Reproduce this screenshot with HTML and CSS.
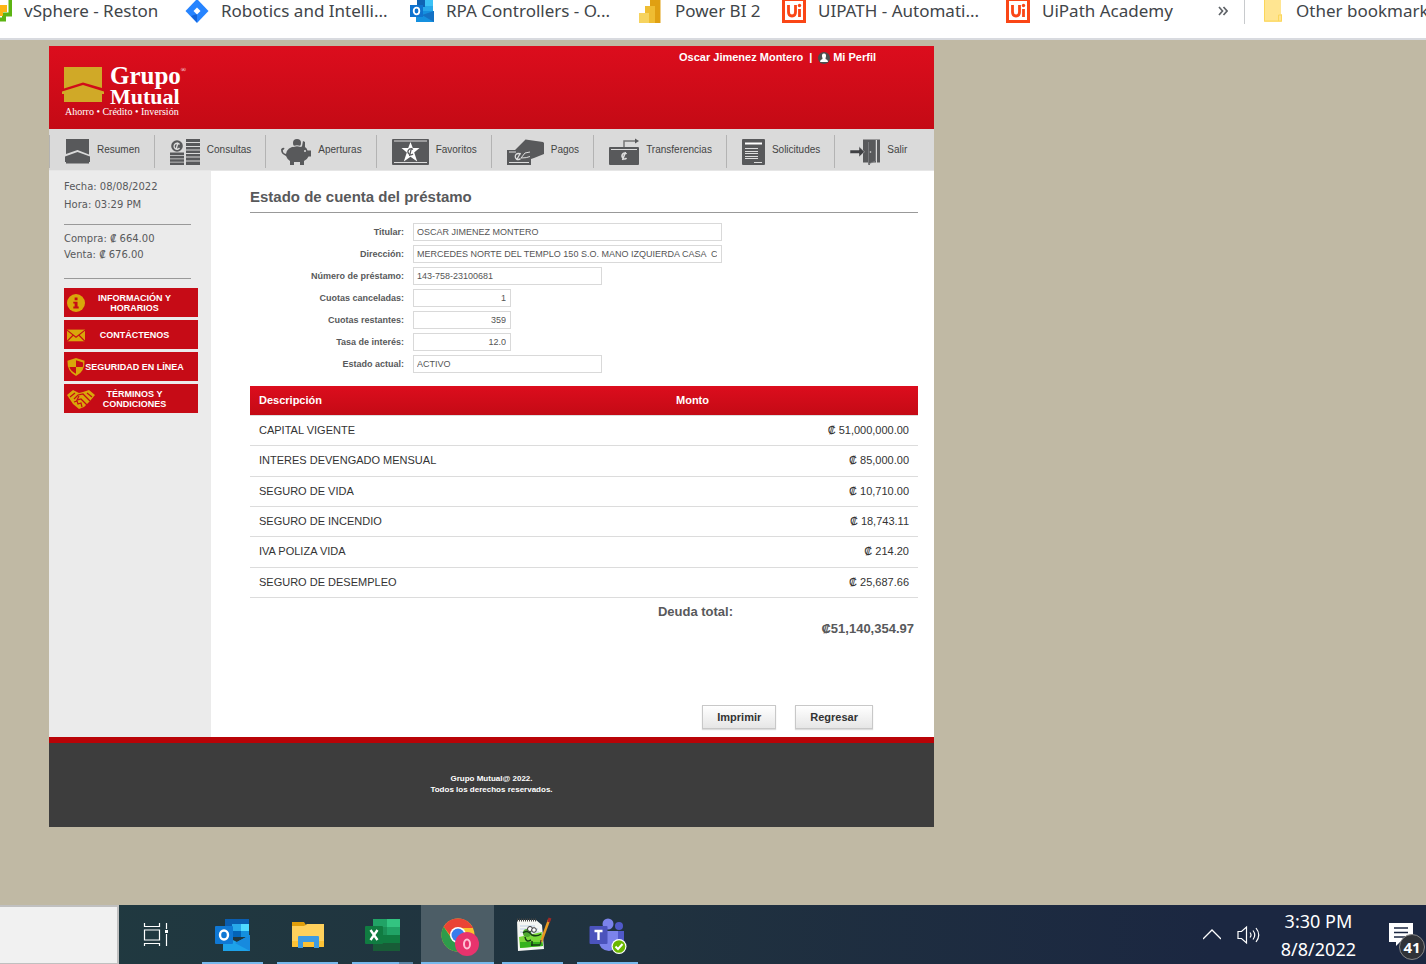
FILE: index.html
```html
<!DOCTYPE html>
<html lang="es">
<head>
<meta charset="utf-8">
<meta name="viewport" content="width=device-width, initial-scale=1">
<title>Grupo Mutual - Estado de cuenta del préstamo</title>
<link rel="stylesheet" href="styles.css">
</head>
<body>
<nav class="bookmarks" aria-label="Bookmarks">
  <div class="bookmark-list">
    <a class="bookmark" href="#"><svg class="bookmark-icon" viewBox="0 0 24 24"><path d="M8 -4H22.500V14.500H16V19.500H2V9" fill="none" stroke="#5cb413" stroke-width="4"/><path d="M12 5h7v7h-4v4h-5v-6h2z" fill="#fdb515"/></svg><span>vSphere - Reston</span></a>
    <a class="bookmark" href="#"><svg class="bookmark-icon" viewBox="0 0 24 24"><path d="M12 -1 23.500 11 12 23 .5 11z" fill="#2684ff"/><path d="M12 14v8.500L6 16z" fill="#1463d8"/><path d="M12 7.500 15.500 11 12 14.500 8.500 11z" fill="#fff"/></svg><span>Robotics and Intelli...</span></a>
    <a class="bookmark" href="#"><svg class="bookmark-icon" viewBox="0 0 24 24"><path d="M7 0h16v12H7z" fill="#28a8ea"/><path d="M7 0h8v7H7z" fill="#0f64b4"/><path d="M15 0h8v6h-8z" fill="#3cc2f6"/><path d="M6 11h18v11H6z" fill="#1590df"/><path d="M24 11v11L12 15z" fill="#1471c4"/><path d="M0 5h13v12H0z" fill="#0f73cf"/><ellipse cx="6.500" cy="11" rx="2.800" ry="3.300" fill="none" stroke="#fff" stroke-width="1.800"/></svg><span>RPA Controllers - O...</span></a>
    <a class="bookmark" href="#"><svg class="bookmark-icon" viewBox="0 0 24 24"><path d="M11-2h10.500v25H11z" fill="#e0a012"/><path d="M6 6h10v17H6z" fill="#efbd32"/><path d="M0 13h10v10H0z" fill="#f6d35f"/></svg><span>Power BI 2</span></a>
    <a class="bookmark" href="#"><svg class="bookmark-icon" viewBox="0 0 24 24"><path d="M1.500-.500h21v22h-21z" fill="#fff" stroke="#fa4616" stroke-width="3"/><path d="M6.500 5v7q0 4 3.500 4t3.500-4V5M17.500 9v8" fill="none" stroke="#fa4616" stroke-width="2.800"/><circle cx="17.500" cy="5.500" r="1.700" fill="#fa4616"/></svg><span>UIPATH - Automati...</span></a>
    <a class="bookmark" href="#"><svg class="bookmark-icon" viewBox="0 0 24 24"><path d="M1.500-.500h21v22h-21z" fill="#fff" stroke="#fa4616" stroke-width="3"/><path d="M6.500 5v7q0 4 3.500 4t3.500-4V5M17.500 9v8" fill="none" stroke="#fa4616" stroke-width="2.800"/><circle cx="17.500" cy="5.500" r="1.700" fill="#fa4616"/></svg><span>UiPath Academy</span></a>
  </div>
  <button class="bookmark-more" type="button" aria-label="More bookmarks"><svg viewBox="0 0 10 10"><path d="M1 1l3.500 4L1 9M5.500 1 9 5 5.500 9" fill="none" stroke="#5f6368" stroke-width="1.700"/></svg></button>
  <a class="bookmark bookmark-other" href="#"><svg class="bookmark-folder" viewBox="0 0 18 24"><path d="M0 0h17v14h1v8H0z" fill="#ffe591"/><path d="M.5 0v21h17v-6h-3v6" fill="none" stroke="#fbd65b"/></svg><span>Other bookmarks</span></a>
</nav>

<div class="viewport">
<div class="site">
  <header class="header">
    <a class="logo" href="#">
      <span class="logo-top">
        <svg class="logo-mark" viewBox="0 0 42 36"><path d="M2 0h38v21L21 15.500 2 21.500z" fill="#d0a927"/><path d="M0 24.500 21 18l21 6.500V27h-2v8H2v-8H0z" fill="#d0a927"/></svg>
        <span class="logo-name"><span class="logo-grupo">Grupo<sup class="logo-reg">®</sup></span><span class="logo-mutual">Mutual</span></span>
      </span>
      <span class="logo-tag">Ahorro • Crédito • Inversión</span>
    </a>
    <div class="account"><span>Oscar Jimenez Montero</span><span>|</span><a class="profile" href="#"><svg class="profile-icon" viewBox="0 0 12 12"><circle cx="6" cy="6" r="6" fill="#4d4d4d"/><path d="M6 1.500c2 0 2.500 2 1.700 4L7.500 7q2.500.7 2.500 3H2Q2 7.700 4.500 7l-.2-1.500C3.500 3.500 4 1.500 6 1.500" fill="#fff"/></svg>Mi Perfil</a></div>
  </header>

  <nav class="menu" aria-label="Principal">
    <a class="menu-item" href="#"><svg class="icon-house" viewBox="0 0 25 28"><path d="M1 1h23v15.500L12.500 12 1 16zM0 18.500 12.500 14 25 18.500V24h-1v1.500H1V24H0z" fill="#58595b"/></svg>Resumen</a>
    <a class="menu-item" href="#"><svg class="icon-30" viewBox="0 0 30 28"><g fill="#58595b"><circle cx="7" cy="8" r="5.800"/><path d="M0 14.500h14v2.800H0zM0 18h14v2.500H0zM0 21.200h14v2.500H0zM0 24.400h14v2.600H0zM16 1h14v3H16zM16 5h14v3H16zM16 9h14v2.600H16zM16 12.500h14V15H16zM16 16h14v2.500H16zM16 19.500h14v3H16zM16 23.500h14V27H16z"/></g><path d="M9.500 6.500a3 3 0 1 0 0 3.500M6 11.500 8 4.500" fill="none" stroke="#ddd" stroke-width="1.300"/></svg>Consultas</a>
    <a class="menu-item" href="#"><svg class="icon-30" viewBox="0 0 30 28"><g fill="#58595b"><circle cx="16" cy="5" r="4"/><path d="M5 16q1-7 10-8l6 .3L22 3l2 1v5q2 1 2.500 3.500H30v6h-2.500Q26 22 23 23v4h-4v-3h-6v3H9v-4q-3-2-4-5Q0 16 0 11.500 1 9 3.500 10L2.800 12q-.6-1-1 .5Q2 15.500 5 16"/></g><path d="M11.500 8.500q4.500-1.500 9 0" fill="none" stroke="#ddd"/><circle cx="24" cy="13" r="1" fill="#ddd"/></svg>Aperturas</a>
    <a class="menu-item" href="#"><svg class="icon-37" viewBox="0 0 37 28"><rect y="1" width="37" height="26" rx="1" fill="#58595b"/><path d="M2 3h33M2 24.500h33" stroke="#ddd"/><path d="M18.500 4l2.300 6h6.700l-5.300 4.500 3 9-6.700-4.800-6.700 4.800 3-9L9.500 10h6.700z" fill="#fff"/><path d="M21 11.500a3 3 0 1 0 0 4.500M17.500 18l2-8" fill="none" stroke="#58595b" stroke-width="1.200"/></svg>Favoritos</a>
    <a class="menu-item" href="#"><svg class="icon-37" viewBox="0 0 37 28"><path d="M0 12h8L18.500 1.500 36 4l1 1v11l-10 4-3 1v6H0z" fill="#58595b"/><path d="M2 14h7M2 24.500h20M23 14l-5 1-4 5q6 0 9-1.500" fill="none" stroke="#ddd"/><path d="M13.500 16.500a3 3 0 1 0 0 4M9.500 22l4-7" fill="none" stroke="#ddd" stroke-width="1.300"/></svg>Pagos</a>
    <a class="menu-item" href="#"><svg class="icon-30" viewBox="0 0 30 28"><path d="M15 10V3h11" fill="none" stroke="#777" stroke-width="1.500"/><path d="M26 .5v5l4-2.500z" fill="#58595b"/><rect y="9" width="30" height="18" rx="1" fill="#58595b"/><path d="M2 11.500h26" stroke="#ddd"/><path d="M17.500 16a2.500 3 0 1 0 0 4M13.500 22l3-8" fill="none" stroke="#ddd" stroke-width="1.500"/></svg>Transferencias</a>
    <a class="menu-item" href="#"><svg class="icon-23" viewBox="0 0 23 28"><rect y="1" width="23" height="26" rx="1" fill="#58595b"/><path d="M3 5.500h17" stroke="#fff" stroke-width="2"/><path d="M3 10.500h13M3 13.500h13M3 15.500h13M3 18.500h13M3 20.500h13M12 24.500h8" stroke="#ddd"/></svg>Solicitudes</a>
    <a class="menu-item" href="#"><svg class="icon-30" viewBox="0 0 30 28"><path d="M13 1.500h17v23h-3V2h-1v22.500h-6V27l-2-.5v-2h-5z" fill="#58595b"/><path d="M18.500 4v22l7-3V2" fill="#58595b" stroke="#85868a" stroke-width=".7"/><path d="M0 12h9V8.500l5.500 5.300L9 19v-3.500H0z" fill="#404144" stroke="#ddd" stroke-width=".5"/><circle cx="20.500" cy="14" r=".8" fill="#ddd"/></svg>Salir</a>
  </nav>

  <div class="body">
    <aside class="sidebar">
      <p class="side-date">Fecha: 08/08/2022<br>Hora: 03:29 PM</p>
      <p class="side-rate">Compra: ₡ 664.00<br>Venta: ₡ 676.00</p>
      <div class="side-links">
        <a class="side-link" href="#"><svg viewBox="0 0 20 20"><circle cx="10" cy="10" r="10" fill="#d9a60a"/><path d="M8.500 4h3.200v3H8.500zM7 8.500h4.700V14H13v2H7v-2h1.500v-3.500H7z" fill="#c60b16"/></svg><span>INFORMACIÓN Y HORARIOS</span></a>
        <a class="side-link" href="#"><svg viewBox="0 0 20 20"><path d="M0 4h20v13H0z" fill="#d9a60a"/><path d="M0 4.500l10 8 10-8M0 17l7-7M20 17l-7-7" fill="none" stroke="#c60b16" stroke-width="1.200"/></svg><span>CONTÁCTENOS</span></a>
        <a class="side-link" href="#"><svg viewBox="0 0 20 20"><path d="M10 0 19.500 3q.5 12-9.500 17Q0 15 .5 3z" fill="#d9a60a"/><path d="M10 2.500V10h7.500q.7-3 .3-5zM10 10v7.500Q4 14.500 2.700 10z" fill="#c60b16"/></svg><span>SEGURIDAD EN LÍNEA</span></a>
        <a class="side-link" href="#"><svg class="wide-icon" viewBox="0 0 28 20"><path d="M0 6l6-5 6 3 4-1 6-2 6 5-5 6-6 6-5 2-6-5z" fill="#d9a60a"/><path d="M3 8l5-4M20 4l5 4M7 10l4-4 5-1 7 7M12 7l-2 4 4-1 6 6M7 13l3-1 1 3 3-1 1 4" fill="none" stroke="#c60b16" stroke-width="1.200"/></svg><span>TÉRMINOS Y CONDICIONES</span></a>
      </div>
    </aside>

    <main class="content">
      <h1 class="title">Estado de cuenta del préstamo</h1>
      <form class="details">
        <label for="titular">Titular:</label><input id="titular" class="field field-l" type="text" value="OSCAR JIMENEZ MONTERO" readonly>
        <label for="direccion">Dirección:</label><input id="direccion" class="field field-l" type="text" value="MERCEDES NORTE DEL TEMPLO 150 S.O. MANO IZQUIERDA CASA  C" readonly>
        <label for="numero">Número de préstamo:</label><input id="numero" class="field field-m" type="text" value="143-758-23100681" readonly>
        <label for="canceladas">Cuotas canceladas:</label><input id="canceladas" class="field field-s" type="text" value="1" readonly>
        <label for="restantes">Cuotas restantes:</label><input id="restantes" class="field field-s" type="text" value="359" readonly>
        <label for="tasa">Tasa de interés:</label><input id="tasa" class="field field-s" type="text" value="12.0" readonly>
        <label for="estado">Estado actual:</label><input id="estado" class="field field-m" type="text" value="ACTIVO" readonly>
      </form>
      <table class="charges">
        <thead><tr><th class="col-desc" scope="col">Descripción</th><th scope="col">Monto</th></tr></thead>
        <tbody>
          <tr><td>CAPITAL VIGENTE</td><td class="amount">₡ 51,000,000.00</td></tr>
          <tr><td>INTERES DEVENGADO MENSUAL</td><td class="amount">₡ 85,000.00</td></tr>
          <tr><td>SEGURO DE VIDA</td><td class="amount">₡ 10,710.00</td></tr>
          <tr><td>SEGURO DE INCENDIO</td><td class="amount">₡ 18,743.11</td></tr>
          <tr><td>IVA POLIZA VIDA</td><td class="amount">₡ 214.20</td></tr>
          <tr><td>SEGURO DE DESEMPLEO</td><td class="amount">₡ 25,687.66</td></tr>
        </tbody>
      </table>
      <div class="total"><span class="total-label">Deuda total:</span><span class="total-value">₡51,140,354.97</span></div>
      <div class="actions"><button class="btn" type="button">Imprimir</button><button class="btn" type="button">Regresar</button></div>
    </main>
  </div>

  <footer class="footer">Grupo Mutual@ 2022.<br>Todos los derechos reservados.</footer>
</div>
</div>

<div class="taskbar">
  <input class="task-search" type="text" aria-label="Search">
  <div class="task-apps">
    <button class="task task-view" type="button" aria-label="Task View"><svg viewBox="0 0 36 36"><path d="M5.500 6v3.500h15V6M5.500 13h15v10h-15zM5.500 29v-2.500h15V29M27.500 6v6M27.500 17v12" fill="none" stroke="#fff" stroke-width="1.200"/><path d="M26 13h3v3h-3z" fill="#fff"/></svg></button>
    <button class="task open" type="button" aria-label="Outlook"><svg viewBox="0 0 36 36"><path d="M10 2h24v18H10z" fill="#0a5db0"/><path d="M17 7h9v7h-9z" fill="#28a8ea"/><path d="M26 7h8v7h-8z" fill="#50d9ff"/><path d="M17 14h9v6h-9z" fill="#0364b8"/><path d="M26 14h8v6h-8z" fill="#1490df"/><path d="M8 18l14 7 13-7v16H8z" fill="#1da2e9"/><path d="M35 18v16L20 26z" fill="#178ade"/><rect y="9" width="18" height="18" rx="1" fill="#0f78d4"/><ellipse cx="9" cy="18" rx="4" ry="4.500" fill="none" stroke="#fff" stroke-width="2.400"/></svg></button>
    <button class="task open" type="button" aria-label="File Explorer"><svg viewBox="0 0 36 36"><path d="M2 5h12l2 3h-1v4H2z" fill="#e19f0a"/><path d="M2 9h12l3-2h17v22q0 1-1 1H3q-1 0-1-1z" fill="#ffd15c"/><path d="M2 24h32v5q0 1-1 1H3q-1 0-1-1z" fill="#fdc235"/><path d="M8 31V20q0-1 1-1h19q1 0 1 1v11h-5v-6H13v6z" fill="#3e9be2"/></svg></button>
    <button class="task open grouped" type="button" aria-label="Excel"><svg viewBox="0 0 36 36"><path d="M8 2h27v32H8z" fill="#21a366"/><path d="M22 2h13v8H22z" fill="#33c481"/><path d="M8 10h14v8H8z" fill="#1b8f56"/><path d="M22 18h13v8H22zM8 18h14v8H8z" fill="#107c41"/><path d="M8 26h27v8H8z" fill="#185c37"/><rect y="9" width="18" height="18" rx="1" fill="#107c41"/><path d="M5.500 13l7 10M12.500 13l-7 10" stroke="#fff" stroke-width="2.400"/></svg></button>
    <button class="task open active" type="button" aria-label="Chrome"><svg viewBox="0 0 36 36"><circle cx="18" cy="18" r="16.500" fill="#fbc02d"/><path d="M3.700 9.700a16.500 16.500 0 0 1 28.600 0L33.500 11H18l-8 7z" fill="#ea4335"/><path d="M3.700 9.700a16.500 16.500 0 0 0 14.300 24.800L24 24l-12-2z" fill="#2e9b4b"/><circle cx="18" cy="18" r="8" fill="#fff"/><circle cx="18" cy="18" r="6.500" fill="#3a7cec"/><circle cx="27" cy="27" r="12" fill="#e8336d"/><ellipse cx="27" cy="27" rx="3" ry="4.500" fill="none" stroke="#ffc0d4" stroke-width="2"/></svg></button>
    <button class="task open" type="button" aria-label="Notepad++"><svg viewBox="0 0 36 36"><path d="M2 3h19l6 5 2 24-26 2z" fill="#f4f6f3"/><path d="M2 3h19" stroke="#444" stroke-width="3" stroke-dasharray="1 1"/><path d="M5 9h15M5 12h18M5 15h19" stroke="#bcd0e4"/><path d="M4 20l23-5 1 14-23 2z" fill="#7bd83a"/><path d="M5 25h22l1 4-23 2z" fill="#35b21c"/><circle cx="12" cy="16" r="4" fill="#4da82f"/><path d="M8 16q4-4 9 2 5 2 9-1M10 20q1 6 6 3M16 28h9M17 24v5" fill="none" stroke="#173c16" stroke-width="1.500"/><circle cx="15" cy="12" r="2.500" fill="#fff" stroke="#333"/><circle cx="19" cy="13" r="2.300" fill="#fff" stroke="#333"/><path d="M34 3 26 25" stroke="#e99a20" stroke-width="2.500"/><path d="M35 1l-1.500 4" stroke="#a12a25" stroke-width="3"/><path d="M26 23l-1 5" stroke="#333"/></svg></button>
    <button class="task open" type="button" aria-label="Teams"><svg viewBox="0 0 36 36"><circle cx="18" cy="7" r="5.500" fill="#7b83eb"/><circle cx="29" cy="9" r="4" fill="#5059c9"/><path d="M22 14h12v9q0 6-6 7h-6z" fill="#5059c9"/><path d="M9 14h19v10q0 9-9 10-10-1-10-10z" fill="#7b83eb"/><rect x="-.5" y="9" width="18" height="18" rx="1" fill="#4b53bc"/><path d="M4.500 14h8M8.500 14v9" stroke="#fff" stroke-width="2.400"/><circle cx="29" cy="29.500" r="7.500" fill="#fff"/><circle cx="29" cy="29.500" r="6.300" fill="#6bb700"/><path d="M25.500 29.500l2.500 2.500 4.500-5" fill="none" stroke="#fff" stroke-width="2"/></svg></button>
  </div>
  <div class="tray">
    <button class="tray-btn" type="button" aria-label="Show hidden icons"><svg class="tray-chevron" viewBox="0 0 18 24"><path d="M0 16 9 7l9 9" fill="none" stroke="#fff" stroke-width="1.300"/></svg></button>
    <button class="tray-btn" type="button" aria-label="Volume"><svg class="tray-volume" viewBox="0 0 24 24"><path d="M1 8.500h3.500L9.500 4v16l-5-4.500H1z" fill="none" stroke="#fff" stroke-width="1.200"/><path d="M13 9.500q2 2.500 0 5M16 7.500q3.500 4.500 0 9M19 5q5.500 7 0 14" fill="none" stroke="#fff" stroke-width="1.200"/></svg></button>
    <div class="clock">3:30 PM<br>8/8/2022</div>
    <button class="notify" type="button" aria-label="Notifications, 41 new"><svg viewBox="0 0 24 24"><path d="M0 0h24v19H11l-4 4v-4H0z" fill="#fff"/><path d="M5 5h14M5 9.500h14M5 14h14" stroke="#1b2741" stroke-width="1.300"/></svg><span class="notify-count">41</span></button>
  </div>
</div>
</body>
</html>
```
FILE: styles.css
```css
* { box-sizing: border-box; }

body {
  margin: 0;
  min-height: 100vh;
  display: flex;
  flex-direction: column;
  overflow-x: hidden;
  background: #c0b9a4;
  font-family: "Liberation Sans", Arial, sans-serif;
  color: #58595b;
}

a { color: inherit; text-decoration: none; }
button { border: 0; padding: 0; background: none; font: inherit; color: inherit; }
svg { display: block; flex: none; }

/* Browser bookmarks */
.bookmarks {
  display: flex;
  height: 40px;
  overflow: hidden;
  background: #fff;
  border-bottom: 2px solid #d8dadf;
  font: 17px/22px "Noto Sans", sans-serif;
  color: #414549;
  white-space: nowrap;
}
.bookmark-list {
  display: grid;
  grid-template-columns: 197px 225px 229px 143px 224px 1fr;
  flex: 1;
  margin-left: -12px;
}
.bookmark { display: flex; gap: 12px; height: 24px; }
.bookmark-icon { width: 24px; height: 24px; }
.bookmark-more { width: 10px; height: 10px; margin: 6px 16px 0 0; }
.bookmark-other {
  flex: none;
  width: 182px;
  padding-left: 19px;
  border-left: 1px solid #c8cacd;
  gap: 14px;
}
.bookmark-folder { width: 18px; height: 24px; }

/* Page */
.viewport { flex: 1; padding: 6px 49px 20px; }
.site { max-width: 885px; background: #fff; }

.header {
  display: flex;
  justify-content: space-between;
  align-items: flex-start;
  min-height: 83px;
  padding: 4px 58px 0 13px;
  background: linear-gradient(#dc0d1d, #c40a15);
  color: #fff;
}
.logo {
  display: flex;
  flex-direction: column;
  padding-top: 15px;
  font-family: "Liberation Serif", "Times New Roman", serif;
}
.logo-top { display: flex; gap: 6px; }
.logo-mark { width: 42px; height: 36px; margin-top: 2px; }
.logo-name { display: flex; flex-direction: column; font-weight: bold; }
.logo-grupo { font-size: 25px; line-height: 22px; }
.logo-mutual { font-size: 22px; line-height: 19px; }
.logo-reg { font-size: 7px; line-height: 0; vertical-align: 12px; font-weight: normal; }
.logo-tag { padding-left: 3px; font-size: 10px; line-height: 12px; }
.account { display: flex; gap: 6px; font-size: 11px; line-height: 15px; font-weight: bold; }
.profile { display: flex; align-items: center; gap: 3px; }
.profile-icon { width: 12px; height: 12px; }

.menu {
  display: flex;
  padding: 6px 0 2px;
  background: #dadada;
  border-bottom: 1px solid #e6e6e6;
  font-size: 10px;
  line-height: 30px;
  color: #444;
}
.menu-item {
  display: flex;
  align-items: flex-start;
  gap: 7px;
  height: 33px;
  padding: 0 14px 0 15px;
  border-left: 1px solid #b3b3b3;
}
.menu-item svg { height: 28px; margin-top: 3px; }
.icon-house { width: 25px; }
.icon-23 { width: 23px; }
.icon-30 { width: 30px; }
.icon-37 { width: 37px; }

.body { display: grid; grid-template-columns: 162px 1fr; }

.sidebar {
  padding: 7px 13px 20px 15px;
  background: #ebebeb;
  font-family: "DejaVu Sans", Verdana, sans-serif;
  font-size: 10px;
}
.side-date, .side-rate { margin: 0 7px 0 0; border-bottom: 1px solid #999; }
.side-date { line-height: 18px; padding-bottom: 10px; }
.side-rate { line-height: 16px; padding: 6px 0 15px; }
.side-links { display: grid; gap: 3px; margin-top: 9px; }
.side-link {
  display: flex;
  align-items: center;
  height: 29px;
  padding: 0 14px 0 3px;
  background: #c60b16;
  color: #fff;
  font: bold 9px/10px "Liberation Sans", Arial, sans-serif;
  text-align: center;
}
.side-link svg { width: 18px; height: 18px; }
.side-link .wide-icon { width: 28px; height: 20px; margin-right: -10px; }
.side-link span { flex: 1; }
.wide-icon + span { padding: 0 12px; }

.content { padding: 16px 16px 8px 39px; min-width: 0; }
.title {
  margin: 0;
  padding-bottom: 5px;
  border-bottom: 1px solid #999;
  font-size: 15px;
  line-height: 20px;
}
.details {
  display: grid;
  grid-template-columns: 154px 1fr;
  gap: 4px 9px;
  margin-top: 10px;
  font-size: 9px;
  line-height: 18px;
}
.details label { text-align: right; font-weight: bold; }
.field {
  height: 18px;
  padding: 0 4px 0 3px;
  border: 1px solid #d9d9d9;
  background: #fff;
  color: #555;
  font: 9px "Liberation Sans", Arial, sans-serif;
}
.field-l { width: 309px; }
.field-m { width: 189px; }
.field-s { width: 98px; text-align: right; }

.charges {
  width: 100%;
  height: 212px;
  margin-top: 13px;
  border-spacing: 0;
  font-size: 11px;
  line-height: 14px;
  color: #333;
}
.charges th {
  height: 30px;
  padding: 0 9px 1px;
  background: linear-gradient(#dc0d1d, #c40a15);
  border-bottom: 1px solid #ddd;
  color: #fff;
  text-align: left;
}
.charges td { height: 30px; padding: 0 9px 1px; border-bottom: 1px solid #dcdcdc; }
.charges .col-desc { width: 417px; }
.charges .amount { text-align: right; }

.total {
  display: flex;
  flex-direction: column;
  align-items: flex-end;
  padding-top: 5px;
  font-size: 13px;
  line-height: 17px;
  font-weight: bold;
}
.total-label { margin-right: 185px; }
.total-value { margin-right: 4px; }

.actions { display: flex; justify-content: flex-end; gap: 19px; margin-top: 68px; padding-right: 45px; }
.btn {
  height: 24px;
  padding: 0 14px;
  border: 1px solid #c8c8c8;
  background: linear-gradient(#fff, #e6e6e6);
  box-shadow: 0 1px 1px #ddd;
  color: #333;
  font-size: 11px;
  font-weight: bold;
}

.footer {
  padding: 30px 0 32px;
  border-top: 6px solid #b90307;
  background: #3d3d3d;
  color: #fff;
  font-size: 8px;
  line-height: 11px;
  font-weight: bold;
  text-align: center;
}

/* Desktop taskbar */
.taskbar {
  display: flex;
  height: 59px;
  background: linear-gradient(90deg, #203a40, #20323f 45%, #1b2741 85%);
  color: #fff;
}
.task-search { width: 119px; border: 2px solid #c0c0c0; border-left: 0; border-bottom-width: 1px; background: #f1f1f1; }
.task-apps { display: flex; gap: 2px; flex: 1; }
.task { display: flex; justify-content: center; width: 73px; padding-top: 12px; position: relative; }
.task svg { width: 36px; height: 36px; overflow: visible; }
.task-view { width: 75px; }
.open::after {
  content: "";
  position: absolute;
  inset: auto 6px 0;
  height: 2px;
  background: #76b9ed;
}
.grouped::after { background: linear-gradient(90deg, #76b9ed 47px, #5a86a8 47px); }
.active { background: #4c5d66; }
.active::after { inset: auto 0 0; }
.tray { display: flex; align-items: center; }
.tray-btn { margin-right: 16px; }
.tray-chevron { width: 18px; height: 24px; }
.tray-volume { width: 24px; height: 24px; }
.clock { margin-left: 4px; font: 18px/28px "Noto Sans", sans-serif; text-align: center; }
.notify { position: relative; margin: 0 13px 0 33px; }
.notify svg { width: 24px; height: 24px; }
.notify-count {
  position: absolute;
  top: 11px;
  left: 10px;
  width: 26px;
  border: 1px solid #888;
  border-radius: 50%;
  background: #303338;
  font: bold 15px/24px "Noto Sans", sans-serif;
  text-align: center;
}
```
